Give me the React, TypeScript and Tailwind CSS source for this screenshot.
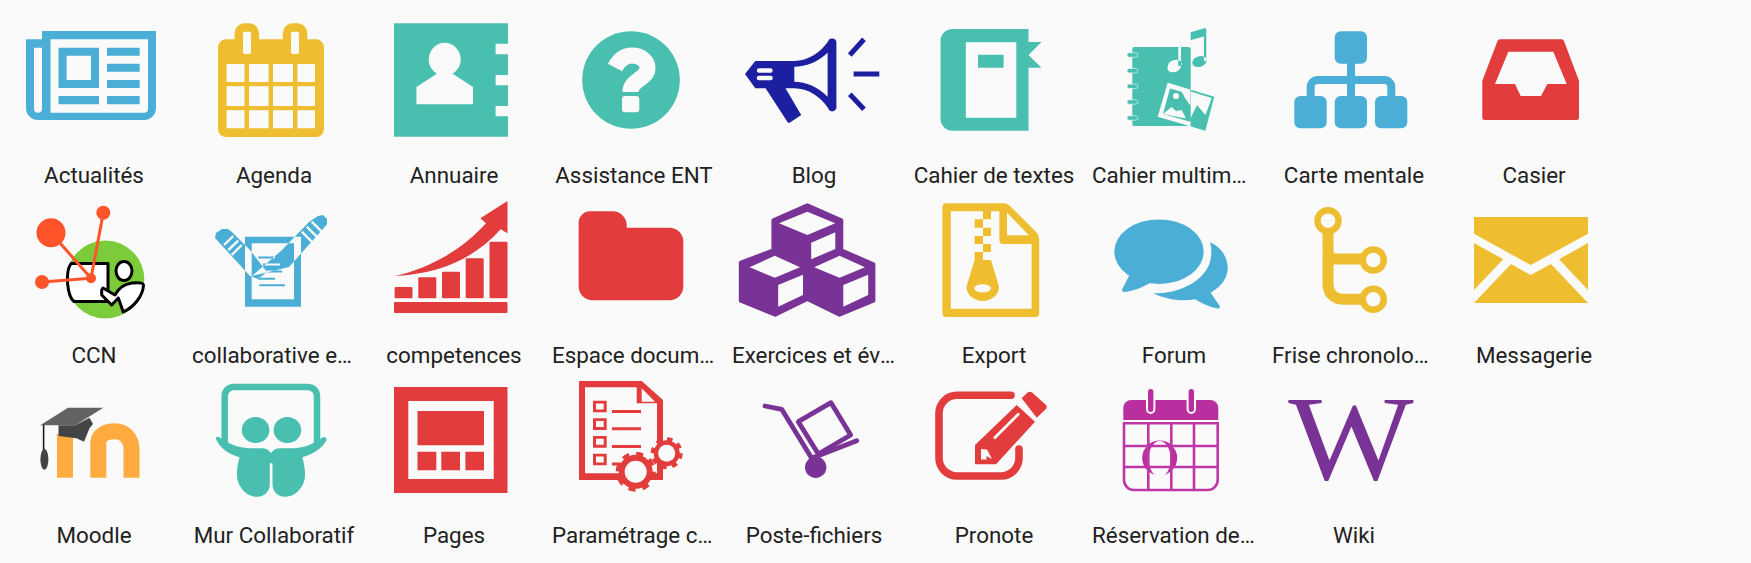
import type { ReactNode } from "react";

const BLUE = "#4baed7";
const YELLOW = "#eebe30";
const TEAL = "#49bfaf";
const RED = "#e23c3c";
const PURPLE = "#793295";
const BG = "#fafafa";

const Actualites = () => (
  <path
    fill={BLUE}
    fillRule="evenodd"
    d="M42 31H156V108a12 12 0 0 1-12 12H38a12 12 0 0 1-12-12V39.3H42ZM50.5 39.3V112.7H144a4 4 0 0 0 4-4V39.3ZM34 47.7V108.7a4 4 0 0 0 8 0V47.7ZM58.5 47.7H99V88H58.5ZM66.6 55.7V80H91V55.7ZM107 47.7H139.7V55.7H107ZM107 63.7H139.7V71.7H107ZM107 80H139.7V88H107ZM107 96H139.7V104.3H107ZM58.5 96H99V104.3H58.5Z"
  />
);

const Agenda = () => (
  <path
    fill={YELLOW}
    fillRule="evenodd"
    d="M226 39.3H234.6V33a9.7 9.7 0 0 1 9.7-9.7H249.3A9.7 9.7 0 0 1 259 33V39.3H282.8V33a9.7 9.7 0 0 1 9.7-9.7H297.6A9.7 9.7 0 0 1 307.3 33V39.3H316A8 8 0 0 1 324 47.3V129A8 8 0 0 1 316 137H226A8 8 0 0 1 218 129V47.3A8 8 0 0 1 226 39.3ZM243 33.7V52a2 2 0 0 0 2 2H249A2 2 0 0 0 251 52V33.7A2 2 0 0 0 249 31.7H245A2 2 0 0 0 243 33.7ZM291 33.7V52a2 2 0 0 0 2 2H297A2 2 0 0 0 299 52V33.7A2 2 0 0 0 297 31.7H293A2 2 0 0 0 291 33.7ZM226.6 64V82H244.5V64ZM249 64V82H268.6V64ZM273 64V82H293V64ZM297.4 64V82H315V64ZM226.6 86.3V106H244.5V86.3ZM249 86.3V106H268.6V86.3ZM273 86.3V106H293V86.3ZM297.4 86.3V106H315V86.3ZM226.6 110.3V128.3H244.5V110.3ZM249 110.3V128.3H268.6V110.3ZM273 110.3V128.3H293V110.3ZM297.4 110.3V128.3H315V110.3Z"
  />
);

const Annuaire = () => (
  <>
    <path
      fill={TEAL}
      d="M394 23.3H508V43.7H495.6V54.3H508V75H495.6V85.3H508V106H495.6V116.3H508V136.7H394Z"
    />
    <ellipse cx="444.7" cy="59.3" rx="16" ry="16.5" fill={BG} />
    <path fill={BG} d="M416.4 87L438 73H451.6L473 87V104.3H416.4Z" />
  </>
);

const Assistance = () => (
  <>
    <circle cx="631" cy="80" r="48.8" fill={TEAL} />
    <path
      fill="none"
      stroke={BG}
      strokeWidth="16"
      d="M615 67.5C619 60 625 55.5 632 55.5C641 55.5 647.5 61 647.5 68C647.5 74 643 76.5 639 79.5C634 83 630.5 86 630.5 92"
    />
    <rect x="622" y="96" width="17.3" height="16.3" rx="3" fill={BG} />
  </>
);

const Blog = () => (
  <>
    <path
      fill="#1c1fa0"
      fillRule="evenodd"
      d="M745 74L755.3 61H794.3C808 61 821 52 828 41.5A4.3 4.3 0 0 1 836.4 43V106A4.3 4.3 0 0 1 828 108C821 97 808 88.3 794.3 88.3H785.5L801.2 115L790 122.6A2 2 0 0 1 787.5 122L765.6 88.3H755.3ZM794.3 66.7V81.7C806 81.7 818 87 827.6 96.7V52.7C818 62 806 66.7 794.3 66.7ZM759 68.3A2.2 2.2 0 0 0 759 72.7H770.5A2.2 2.2 0 0 0 770.5 68.3ZM759 75.7A2.3 2.3 0 0 0 759 80.3H770.5A2.3 2.3 0 0 0 770.5 75.7Z"
    />
    <path
      stroke="#1c1fa0"
      strokeWidth="5"
      fill="none"
      d="M849.8 55L864 39.3M853.6 74H879.3M849.8 94.3L864 109.3"
    />
  </>
);

const CahierTextes = () => (
  <path
    fill={TEAL}
    fillRule="evenodd"
    d="M952.5 29H1028.5V42H1041.5L1028.5 55L1041.5 67.7H1028.5V130.7H952.5A12 12 0 0 1 940.5 118.7V41A12 12 0 0 1 952.5 29ZM965.8 42.3V117.7H1016.3V42.3ZM978 54.7H1003.6V67.7H978Z"
  />
);

const notePath =
  "M1178.3 36L1205 28Q1206.3 28 1206.3 30V61H1204V36.5L1181 42.7V66H1178.3ZM1192.5 61.5a7 5 -20 1 0 14 0a7 5 -20 1 0 -14 0ZM1168 66a7 5 -20 1 0 13 0a7 5 -20 1 0 -13 0Z";

const CahierMulti = () => (
  <>
    <defs>
      <clipPath id="multi-in">
        <rect x="1120" y="20" width="70.7" height="120" />
      </clipPath>
      <clipPath id="multi-out">
        <rect x="1190.7" y="20" width="40" height="120" />
      </clipPath>
    </defs>
    <path fill={TEAL} d="M1134 47H1188A2.7 2.7 0 0 1 1190.7 49.7V126H1134A1.7 1.7 0 0 1 1132.3 124.3V48.7A1.7 1.7 0 0 1 1134 47Z" />
    {[55, 70.7, 86.3, 102, 118].map((y) => (
      <rect key={y} x="1127" y={y - 2.2} width="11" height="4.4" rx="2.2" fill={TEAL} stroke={BG} strokeWidth="0.6" />
    ))}
    <g clipPath="url(#multi-in)">
      <path fill={BG} d={notePath} />
      <path fill={BG} d="M1167.7 82.7L1214.3 96.7L1205.3 130.7L1157.7 116.7Z" />
      <path fill={TEAL} d="M1170 88.5L1209.5 100L1203 125.5L1163 114Z" />
      <circle cx="1176" cy="96" r="3" fill={BG} />
      <path fill={BG} d="M1163 114L1171.5 107L1176 111L1181.7 110L1186 118.5Z" />
      <path fill={BG} d="M1181.7 91.5L1192 94.5L1192 108L1185 98Z" />
    </g>
    <g clipPath="url(#multi-out)">
      <path fill={TEAL} d={notePath} />
      <path fill={TEAL} d="M1167.7 82.7L1214.3 96.7L1205.3 130.7L1157.7 116.7Z" />
      <path fill={BG} d="M1190.7 91.5L1211.7 98L1205.5 115L1197 105L1190.7 118Z" />
    </g>
  </>
);

const CarteMentale = () => (
  <>
    <rect x="1334.7" y="31.3" width="32.3" height="32.4" rx="6" fill={BLUE} />
    <rect x="1294.3" y="96" width="32.4" height="32.3" rx="6" fill={BLUE} />
    <rect x="1334.7" y="96" width="32.3" height="32.3" rx="6" fill={BLUE} />
    <rect x="1375" y="96" width="32.3" height="32.3" rx="6" fill={BLUE} />
    <path
      fill="none"
      stroke={BLUE}
      strokeWidth="8"
      d="M1351 63V96M1310.7 96V87a7 7 0 0 1 7-7H1384.3a7 7 0 0 1 7 7V96"
    />
  </>
);

const Casier = () => (
  <path
    fill={RED}
    fillRule="evenodd"
    d="M1500 39.3H1561.7A3 3 0 0 1 1564 41L1578.5 79.5A4 4 0 0 1 1579 81.7V117.5A2.5 2.5 0 0 1 1576.5 120H1484.8A2.5 2.5 0 0 1 1482.3 117.5V81.7A4 4 0 0 1 1482.8 79.5L1497.5 41A3 3 0 0 1 1500 39.3ZM1508.3 51.7L1495 84H1515L1520.7 96H1541L1547.3 84H1566.7L1553.3 51.7Z"
  />
);

const Ccn = () => (
  <>
    <circle cx="105.3" cy="279.5" r="39" fill="#7bcb3b" />
    <path
      fill="#fff"
      stroke="#000"
      strokeWidth="3"
      strokeLinejoin="round"
      d="M71 263.5H108V301.5H74C67 296 65 272 71 263.5Z"
    />
    <ellipse cx="124" cy="271" rx="8" ry="9.5" fill="#fff" stroke="#000" strokeWidth="3" />
    <path
      fill="#fff"
      stroke="#000"
      strokeWidth="3"
      strokeLinejoin="round"
      d="M101.7 290L103 288L115 295C118 289 124 284 132 283C138 282.5 143 282.5 143.5 285C143 296 134 307 123.3 312L118.3 298L111.7 305L101.7 295Z"
    />
    <path
      stroke="#ff5429"
      strokeWidth="3"
      fill="none"
      d="M51 232.7L91 278.3M103.3 212.7L91 278.3M42 282L91 278.3"
    />
    <circle cx="51" cy="232.7" r="14.5" fill="#ff5429" />
    <circle cx="103.3" cy="212.7" r="7" fill="#ff5429" />
    <circle cx="42" cy="282" r="7" fill="#ff5429" />
    <circle cx="91" cy="278.3" r="5" fill="#ff5429" />
  </>
);

const Collaborative = () => (
  <>
    <path
      fill={BLUE}
      fillRule="evenodd"
      d="M245 236.7H301V306.7H245ZM251.7 243.3V299.3H294V243.3ZM215 238L216 233L222 229L228 229L232 232L250 250L267 272L258 279L250 276ZM309 222L318 216L323 215L327 219L327 224L323 229L289 267L252 276L282 250ZM258.3 256.5H275V258.5H258.3ZM263 263.5H280V265.5H263ZM266.5 270.5H282V272.5H266.5ZM258.3 277.7H275V279.7H258.3ZM259.3 284.3H285V286.3H259.3Z"
    />
    <path
      stroke={BG}
      strokeWidth="2.4"
      fill="none"
      d="M224 245L233.3 236M228.3 250L238.3 240.7M231.7 255L241.7 245M301.7 231.7L311.7 241.7M306.7 226.7L316.7 236.7M311.7 221.7L321.7 231.7"
    />
  </>
);

const Competences = () => (
  <>
    <rect x="394" y="302" width="113.5" height="11" rx="1" fill={RED} />
    <rect x="394.6" y="287" width="17.9" height="11.3" rx="1" fill={RED} />
    <rect x="418.3" y="277.3" width="18" height="21" rx="1" fill={RED} />
    <rect x="442" y="271.7" width="18" height="26.6" rx="1" fill={RED} />
    <rect x="465.7" y="258.3" width="18" height="40" rx="1" fill={RED} />
    <rect x="489.5" y="241.7" width="18" height="56.6" rx="1" fill={RED} />
    <path
      fill={RED}
      d="M395 276C430 268 462 250 486 223.3L480.3 218.3L507.5 201V233.3L500.6 229.3C475 258 440 274 395 276Z"
    />
  </>
);

const EspaceDoc = () => (
  <path
    fill={RED}
    d="M590 211.3H612.7A14 14 0 0 1 626.7 225.3V227.7H669.3A14 14 0 0 1 683.3 241.7V286.3A14 14 0 0 1 669.3 300.3H592.6A14 14 0 0 1 578.6 286.3V222.7A11.4 11.4 0 0 1 590 211.3Z"
  />
);

const Exercices = () => (
  <>
    <path
      fill={PURPLE}
      stroke={PURPLE}
      strokeWidth="4"
      strokeLinejoin="round"
      d="M807.3 205.3L841.3 220.3V250.3L873.4 264.3V300.7L839.5 314.7L807.3 299L775.2 314.7L740.8 300.7V262.7L773.4 250.3V220.3Z"
    />
    <path
      fill={BG}
      d="M807.3 211.7L835.3 223.3L807.3 235L779 223.3ZM835.3 232.3V249L811.2 259.3V242.7ZM774.8 255.7L800 267.3L774.8 277.7L749.5 267.3ZM803 274.7V295L778.2 306.7V285ZM839.5 255.7L865 267.3L839.5 277.7L814.2 267.3ZM868.2 274.7V295L843.3 306.7V285Z"
    />
  </>
);

const Export = () => (
  <path
    fill={YELLOW}
    fillRule="evenodd"
    d="M946.4 203.3H1004A8 8 0 0 1 1010 206L1036 232A10 10 0 0 1 1039.2 239V313A4 4 0 0 1 1035.2 317H946.4A4 4 0 0 1 942.4 313V207.3A4 4 0 0 1 946.4 203.3ZM950.8 211.3V308.7H1031.6V244H1003.4A4 4 0 0 1 999.4 240V211.3H991V219.3H983V211.3ZM983 219.3H974.6V227.7H983ZM983 227.7V236H991V227.7ZM983 236H974.6V244H983ZM983 244V252H991V244ZM983 252H974.6V260L966.5 286.7A16 14 0 0 0 999 286.7L991 260H983ZM1007 212.7V235.3H1029ZM974.2 288.3A8.4 4 0 0 0 991 288.3A8.4 4 0 0 0 974.2 288.3Z"
  />
);

const Forum = () => (
  <>
    <ellipse cx="1159" cy="251.7" rx="44.7" ry="32.3" fill={BLUE} />
    <path
      fill={BLUE}
      d="M1131 272L1122.3 289A2 2 0 0 0 1124 292C1132 291.5 1141 288 1150 283Z"
    />
    <path
      fill={BLUE}
      d="M1210 242.3C1221 247 1227.7 257 1227.7 268.3C1227.7 278 1221 287 1210.7 292.7L1219 305A2 2 0 0 1 1216.7 308.3C1209 307 1202 303.5 1195 299.3C1180 302 1165 299 1153.3 293.3C1180 294 1204 281 1210 262C1211.5 256 1212 249 1210 242.3Z"
    />
  </>
);

const Frise = () => (
  <g fill="none" stroke={YELLOW}>
    <circle cx="1328" cy="220.7" r="10.5" strokeWidth="6.5" />
    <circle cx="1373.3" cy="260" r="10.5" strokeWidth="6.5" />
    <circle cx="1373.3" cy="299.3" r="10.5" strokeWidth="6.5" />
    <path
      strokeWidth="11"
      d="M1328 232V251C1328 256 1331 259 1336 259H1363M1328 255V284C1328 293 1334 299.3 1343 299.3H1363"
    />
  </g>
);

const Messagerie = () => (
  <path
    fill={YELLOW}
    d="M1474 217H1588V233.7L1530.7 265L1474 233.7ZM1474 243L1503.3 259.3L1474 290ZM1588 243L1559 259.3L1588 290ZM1474 303L1511 264L1530.7 275L1551 264L1588 303Z"
  />
);

const Moodle = () => (
  <>
    <path
      fill="none"
      stroke="#ffab40"
      strokeWidth="16"
      d="M98.3 477.7V443C98.3 435 106 431.3 115 431.3C124 431.3 131.5 438 131.5 449V477.7M65 477.7V434"
    />
    <path
      fill="#444"
      d="M58.5 425.3H75.4L89.5 417.7L93 424L89.5 428.3L84 441.7L76.5 438.3L58.5 436Z"
    />
    <path fill="#636363" d="M40.2 425.3L68 407.7H103.3L75.4 425.3Z" />
    <path stroke="#111" strokeWidth="1.5" d="M43.6 425V450" />
    <ellipse cx="44.4" cy="459.3" rx="4" ry="10.5" fill="#444" />
  </>
);

const MurCollab = () => (
  <>
    <path
      fill="none"
      stroke={TEAL}
      strokeWidth="6.5"
      d="M224.7 444V396a9 9 0 0 1 9-9H308a9 9 0 0 1 9 9V444"
    />
    <ellipse cx="255.6" cy="430" rx="13.8" ry="13" fill={TEAL} />
    <ellipse cx="287.4" cy="430" rx="13.8" ry="13" fill={TEAL} />
    <path
      fill={TEAL}
      d="M215.5 438A2.7 2.7 0 0 1 220 437.7C228 444 240 448.3 252.6 448.3H262C266 448.3 269 450 271 453.3C273 450 276 448.3 280 448.3H291C303 448.3 314 444 322 437.7A2.7 2.7 0 0 1 326.5 440C322 449 313 454 302.3 457.3C306 470 306 480 302 486C298 493 292 496.7 285 496.7C277 496.7 272.5 491 272.5 484V463.3H269.8V484C269.8 491 265 496.7 257 496.7C250 496.7 244 493 240 486C236 480 236 470 239.6 457.3C229 454 220 449 215.5 438Z"
    />
  </>
);

const Pages = () => (
  <path
    fill={RED}
    fillRule="evenodd"
    d="M394 387H507.5V493H394ZM408.3 401V479H493.7V401ZM417.5 411H484V445.3H417.5ZM417.5 451.7H436.3V470.3H417.5ZM441.3 451.7H460V470.3H441.3ZM465.4 451.7H484V470.3H465.4Z"
  />
);

const Gear = ({ cx, cy, r, hole, dash }: { cx: number; cy: number; r: number; hole: number; dash: string }) => (
  <>
    <circle cx={cx} cy={cy} r={r} fill={RED} />
    <circle cx={cx} cy={cy} r={r} fill="none" stroke={RED} strokeWidth="6" strokeDasharray={dash} />
    <circle cx={cx} cy={cy} r={hole} fill={BG} />
  </>
);

const Parametrage = () => (
  <>
    <path
      fill={RED}
      fillRule="evenodd"
      d="M579 381H641.7L663 400V480H579ZM585 387.3V473.3H657V403.3H636.7V387.3ZM641.7 388.3V401.7H655Z"
    />
    <path
      fill={RED}
      fillRule="evenodd"
      d="M593 400.7H606.7V412.3H593ZM596 403.5V409.5H603.7V403.5ZM593 418.3H606.7V430H593ZM596 421V427H603.7V421ZM593 436H606.7V447.7H593ZM596 438.8V444.8H603.7V438.8ZM593 453.7H606.7V465.3H593ZM596 456.5V462.5H603.7V456.5ZM612 410H641V413H612ZM612 427.3H641V430.3H612ZM612 445H641V448H612ZM612 462.5H622V465.5H612Z"
    />
    <Gear cx={635.7} cy={471.7} r={17} hole={11} dash="6.6 6.75" />
    <Gear cx={666.7} cy={453.3} r={13} hole={8.5} dash="5 5.2" />
  </>
);

const PosteFichiers = () => (
  <>
    <g fill="none" stroke={PURPLE} strokeWidth="4.8" strokeLinecap="round" strokeLinejoin="round">
      <path d="M765 406L781.7 409.3L811.7 458.3L856.7 440.7" />
      <path d="M798.3 421.7L831 402.7L850.7 435L818.3 454Z" />
    </g>
    <circle cx="815.7" cy="467.3" r="10.7" fill={PURPLE} />
  </>
);

const Pronote = () => (
  <>
    <path
      fill="none"
      stroke={RED}
      strokeWidth="7.6"
      strokeLinecap="round"
      d="M1011 395.3H957a18 18 0 0 0-18 18V458a18 18 0 0 0 18 18H1001a18 18 0 0 0 18-18V449"
    />
    <path
      fill={RED}
      fillRule="evenodd"
      d="M975 445L1016.7 405L1035 421.7L996 464.3H975ZM1018 412.5L993 437.5L995 439.5L1020 414.5ZM981 449V459.5H986.5V456L992 459L987 449.5Z"
    />
    <path
      fill={RED}
      d="M1021.7 398.3L1027 393A4 4 0 0 1 1032 392.5L1045.5 404.5A3.5 3.5 0 0 1 1046 409L1036.7 417.7Z"
    />
  </>
);

const Reservation = () => (
  <>
    <path
      fill="#b92fa0"
      d="M1131.3 400H1210.3A8 8 0 0 1 1218.3 408V420H1123.3V408A8 8 0 0 1 1131.3 400Z"
    />
    <rect x="1147" y="388" width="7.4" height="25" rx="3.7" fill="#b92fa0" stroke={BG} strokeWidth="2" />
    <rect x="1187.6" y="388" width="7.4" height="25" rx="3.7" fill="#b92fa0" stroke={BG} strokeWidth="2" />
    <circle cx="1159.7" cy="458" r="17.5" fill="#b92fa0" />
    <ellipse cx="1159.7" cy="459" rx="11" ry="18" fill={BG} />
    <path
      fill="none"
      stroke="#bd37a6"
      strokeWidth="2.6"
      d="M1124 423.3H1217.7V480a10 10 0 0 1-10 10H1134a10 10 0 0 1-10-10ZM1124 446H1217.7M1124 467H1217.7M1148.3 423.3V490M1171.3 423.3V490M1194 423.3V490"
    />
  </>
);

const Wiki = () => (
  <text
    x="1288.3"
    y="479"
    fontFamily="'Liberation Serif', serif"
    fontSize="120"
    textLength="125.4"
    lengthAdjust="spacingAndGlyphs"
    fill={PURPLE}
  >
    W
  </text>
);

const Tile = ({ label, col, row, children }: { label: string; col: number; row: number; children: ReactNode }) => (
  <div className="flex flex-col items-center">
    <svg
      width="180"
      height="151"
      viewBox={`${4 + col * 180} ${10 + row * 180} 180 151`}
      className="block shrink-0"
      aria-hidden="true"
    >
      {children}
    </svg>
    <p className="w-[164px] shrink-0 truncate text-center text-[22.4px] leading-7 text-[#212121]">{label}</p>
  </div>
);

const tiles: { label: string; icon: ReactNode }[] = [
  { label: "Actualités", icon: <Actualites /> },
  { label: "Agenda", icon: <Agenda /> },
  { label: "Annuaire", icon: <Annuaire /> },
  { label: "Assistance ENT", icon: <Assistance /> },
  { label: "Blog", icon: <Blog /> },
  { label: "Cahier de textes", icon: <CahierTextes /> },
  { label: "Cahier multimédia", icon: <CahierMulti /> },
  { label: "Carte mentale", icon: <CarteMentale /> },
  { label: "Casier", icon: <Casier /> },
  { label: "CCN", icon: <Ccn /> },
  { label: "collaborative editor", icon: <Collaborative /> },
  { label: "competences", icon: <Competences /> },
  { label: "Espace documentaire", icon: <EspaceDoc /> },
  { label: "Exercices et évaluations", icon: <Exercices /> },
  { label: "Export", icon: <Export /> },
  { label: "Forum", icon: <Forum /> },
  { label: "Frise chronologique", icon: <Frise /> },
  { label: "Messagerie", icon: <Messagerie /> },
  { label: "Moodle", icon: <Moodle /> },
  { label: "Mur Collaboratif", icon: <MurCollab /> },
  { label: "Pages", icon: <Pages /> },
  { label: "Paramétrage classe", icon: <Parametrage /> },
  { label: "Poste-fichiers", icon: <PosteFichiers /> },
  { label: "Pronote", icon: <Pronote /> },
  { label: "Réservation de ressources", icon: <Reservation /> },
  { label: "Wiki", icon: <Wiki /> },
];

const App = () => {
  return (
    <div className="h-screen overflow-hidden bg-[#fafafa] pl-1 pt-2.5 font-['Roboto',sans-serif]">
      <div className="grid grid-cols-[repeat(9,180px)] auto-rows-[180px]">
        {tiles.map((tile, i) => (
          <Tile key={tile.label} label={tile.label} col={i % 9} row={Math.floor(i / 9)}>
            {tile.icon}
          </Tile>
        ))}
      </div>
    </div>
  );
};

export default App;
